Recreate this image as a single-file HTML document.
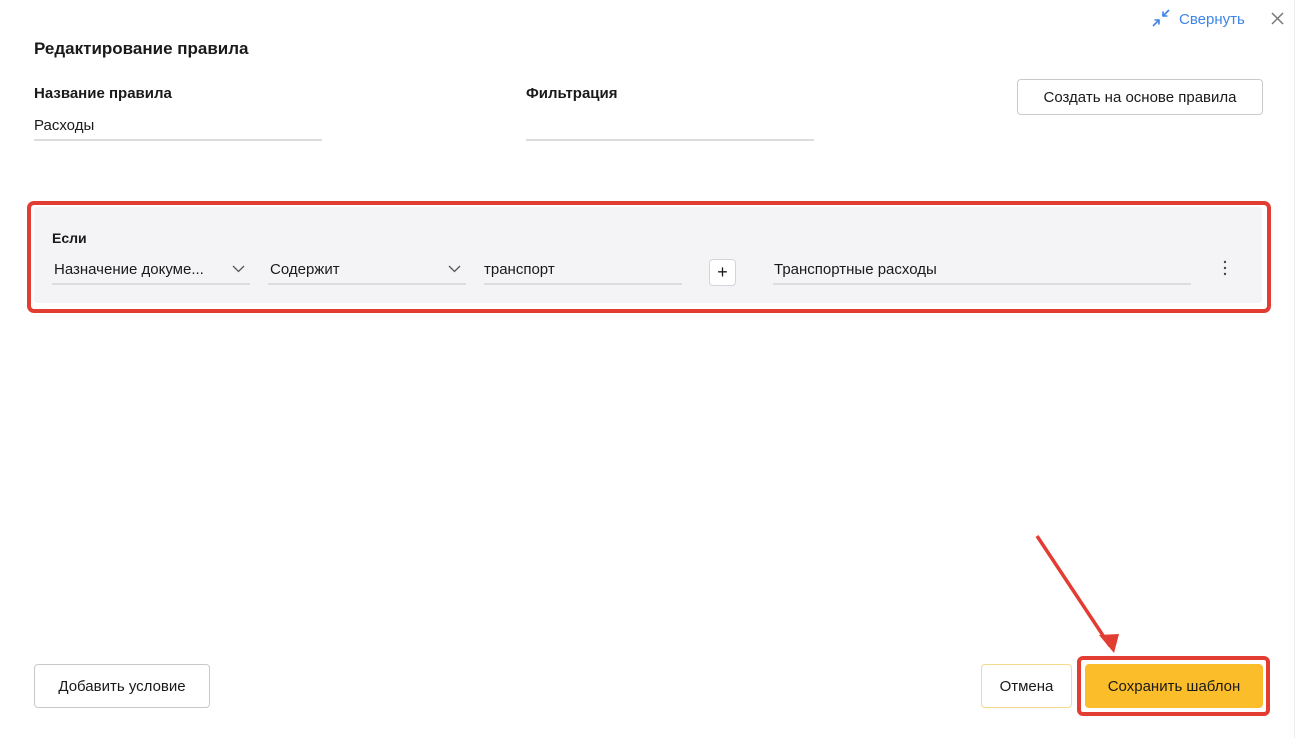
<!DOCTYPE html>
<html><head><meta charset="utf-8"><style>
*{box-sizing:border-box;margin:0;padding:0}
body{width:1299px;height:738px;background:#fff;font-family:"Liberation Sans",sans-serif;color:#1a1a1a;position:relative;overflow:hidden}
.a{position:absolute}
.t{font-size:15px}
.b{font-weight:bold}
.line{position:absolute;height:2px;background:#dcdcde}
.btn{position:absolute;border:1px solid #c9c9cc;border-radius:4px;background:#fff;font-size:15px;display:flex;align-items:center;justify-content:center}
</style></head><body>
<div class="a" style="left:1294px;top:0;width:1px;height:738px;background:#ececec"></div>
<svg class="a" style="left:1151px;top:8px" width="20" height="20" viewBox="0 0 20 20" fill="none" stroke="#3d84e8" stroke-width="1.6"><path d="M18 2l-6 6M12 3.5V8h4.5M2 18l6-6M8 16.5V12H3.5"/></svg>
<div class="a t" style="left:1179px;top:11px;color:#3d84e8">Свернуть</div>
<svg class="a" style="left:1271px;top:12px" width="13" height="13" viewBox="0 0 13 13" stroke="#777" stroke-width="1.5"><path d="M1 1l11 11M12 1L1 12"/></svg>
<div class="a b" style="left:34px;top:39px;font-size:17px">Редактирование правила</div>
<div class="a b t" style="left:34px;top:85px">Название правила</div>
<div class="a t" style="left:34px;top:117px">Расходы</div>
<div class="line" style="left:34px;top:139px;width:288px"></div>
<div class="a b t" style="left:526px;top:85px">Фильтрация</div>
<div class="line" style="left:526px;top:139px;width:288px"></div>
<div class="btn" style="left:1017px;top:79px;width:246px;height:36px">Создать на основе правила</div>
<div class="a" style="left:27px;top:201px;width:1244px;height:112px;border:4px solid #e23d33;border-radius:7px"></div>
<div class="a" style="left:34px;top:207px;width:1228px;height:96px;background:#f4f4f6;border-radius:3px"></div>
<div class="a b t" style="left:52px;top:230px;font-size:14px">Если</div>
<div class="a t" style="left:54px;top:261px">Назначение докуме...</div>
<svg class="a" style="left:232px;top:265px" width="13" height="8" viewBox="0 0 13 8" fill="none" stroke="#555" stroke-width="1.3"><path d="M1 1l5.5 5.5L12 1"/></svg>
<div class="line" style="left:52px;top:283px;width:198px"></div>
<div class="a t" style="left:270px;top:261px">Содержит</div>
<svg class="a" style="left:448px;top:265px" width="13" height="8" viewBox="0 0 13 8" fill="none" stroke="#555" stroke-width="1.3"><path d="M1 1l5.5 5.5L12 1"/></svg>
<div class="line" style="left:268px;top:283px;width:198px"></div>
<div class="a t" style="left:484px;top:261px">транспорт</div>
<div class="line" style="left:484px;top:283px;width:198px"></div>
<div class="btn" style="left:709px;top:259px;width:27px;height:27px;font-size:18px;border-color:#d4d4d8">+</div>
<div class="a t" style="left:774px;top:261px">Транспортные расходы</div>
<div class="line" style="left:773px;top:283px;width:418px"></div>
<svg class="a" style="left:1223px;top:260px" width="4" height="16"><circle cx="2" cy="2" r="1.2" fill="#444"/><circle cx="2" cy="8" r="1.2" fill="#444"/><circle cx="2" cy="14" r="1.2" fill="#444"/></svg>
<div class="btn" style="left:34px;top:664px;width:176px;height:44px">Добавить условие</div>
<svg class="a" style="left:1030px;top:530px" width="90" height="125"><path d="M7 6L80 116" stroke="#e23d33" stroke-width="3.5"/><path d="M84 123L69 105L89 104Z" fill="#e23d33"/></svg>
<div class="btn" style="left:981px;top:664px;width:91px;height:44px;border-color:#f6d98a">Отмена</div>
<div class="a" style="left:1077px;top:656px;width:193px;height:60px;border:4px solid #e23d33;border-radius:6px"></div>
<div class="btn" style="left:1085px;top:664px;width:178px;height:44px;background:#fbbd2a;border-color:#fbbd2a">Сохранить шаблон</div>
</body></html>
